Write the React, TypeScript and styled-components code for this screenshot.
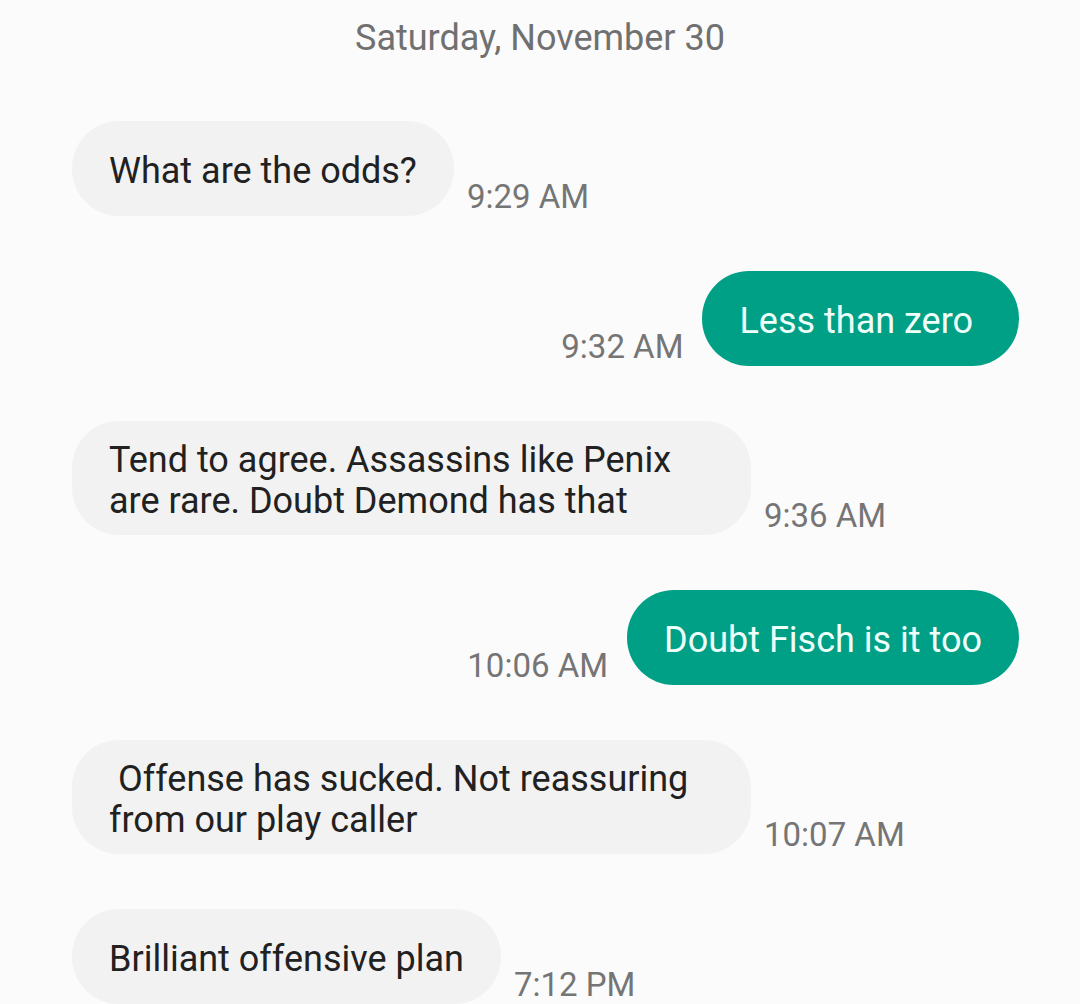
import styled, { createGlobalStyle } from 'styled-components'

type Message = { text: string; time: string; mine?: boolean }

const messages: Message[] = [
  { text: 'What are the odds?', time: '9:29 AM' },
  { text: 'Less than zero\u00a0', time: '9:32 AM', mine: true },
  { text: 'Tend to agree. Assassins like Penix are rare. Doubt Demond has that', time: '9:36 AM' },
  { text: 'Doubt Fisch is it too', time: '10:06 AM', mine: true },
  { text: '\u00a0Offense has sucked. Not reassuring from our play caller', time: '10:07 AM' },
  { text: 'Brilliant offensive plan', time: '7:12 PM' },
]

export default function App() {
  return (
    <>
      <GlobalStyle />
      <Screen>
        <DateHeader>Saturday, November 30</DateHeader>
        <Thread>
          {messages.map((m, i) => (
            <Row key={i} mine={!!m.mine}>
              {m.mine && <Time mine>{m.time}</Time>}
              <Bubble mine={!!m.mine}>{m.text}</Bubble>
              {!m.mine && <Time>{m.time}</Time>}
            </Row>
          ))}
        </Thread>
      </Screen>
    </>
  )
}

const GlobalStyle = createGlobalStyle`
  html, body {
    margin: 0;
    padding: 0;
    background: #fbfbfb;
  }
  body {
    font-family: Roboto, "Noto Sans", "Liberation Sans", sans-serif;
  }
`

const Screen = styled.div`
  width: 1080px;
  height: 1004px;
  overflow: hidden;
  background: #fbfbfb;
  display: flex;
  flex-direction: column;
`

const DateHeader = styled.div`
  padding-top: 18px;
  font-size: 36px;
  line-height: 40px;
  color: #707070;
  text-align: center;
`

const Thread = styled.div`
  margin-top: 63px;
  display: flex;
  flex-direction: column;
  gap: 55px;
  padding: 0 61px 0 72px;
`

const Row = styled.div.withConfig({ shouldForwardProp: (p) => p !== 'mine' })<{ mine: boolean }>`
  display: flex;
  align-items: flex-end;
  justify-content: ${(p) => (p.mine ? 'flex-end' : 'flex-start')};
`

const Bubble = styled.div.withConfig({ shouldForwardProp: (p) => p !== 'mine' })<{ mine: boolean }>`
  box-sizing: border-box;
  max-width: 679px;
  min-height: 95px;
  padding: 19px 37px 13px;
  display: flex;
  align-items: center;
  border-radius: 47px;
  font-size: 36px;
  line-height: 41px;
  background: ${(p) => (p.mine ? '#00a086' : '#f2f2f2')};
  color: ${(p) => (p.mine ? '#effffa' : '#212121')};
`

const Time = styled.div.withConfig({ shouldForwardProp: (p) => p !== 'mine' })<{ mine?: boolean }>`
  flex-shrink: 0;
  font-size: 33px;
  line-height: 33px;
  color: #757575;
  margin: ${(p) => (p.mine ? '0 19px 3px 0' : '0 0 3px 13px')};
`
